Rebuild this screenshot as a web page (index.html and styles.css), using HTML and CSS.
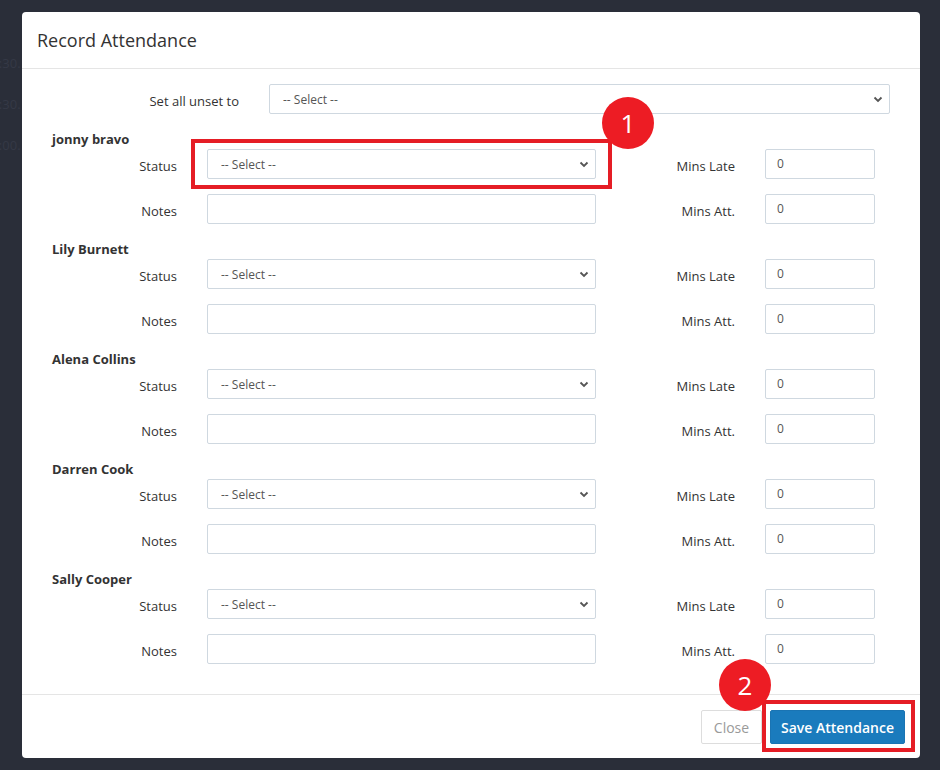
FILE: index.html
```html
<!DOCTYPE html>
<html>
<head>
<meta charset="utf-8">
<link rel="stylesheet" href="styles.css">
</head>
<body>
<div class="page">
  <div class="backdrop-text">
    <div>10:30.</div>
    <div>11:30.</div>
    <div>12:00.</div>
  </div>

  <div class="modal">
    <div class="modal-header"><h4>Record Attendance</h4></div>
    <div class="modal-body">
      <div class="set-all">
        <label>Set all unset to</label>
        <div class="sel">
          <select><option>-- Select --</option></select>
          <svg class="chev" width="10" height="7" viewBox="0 0 10 7"><polyline points="1.5,1.5 5,5 8.5,1.5" fill="none" stroke="#555" stroke-width="1.8"/></svg>
        </div>
      </div>

      <div class="person">
        <div class="name">jonny bravo</div>
        <div class="row">
          <label>Status</label>
          <div class="sel"><select><option>-- Select --</option></select><svg class="chev" width="10" height="7" viewBox="0 0 10 7"><polyline points="1.5,1.5 5,5 8.5,1.5" fill="none" stroke="#555" stroke-width="1.8"/></svg></div>
          <label>Mins Late</label>
          <input class="num" value="0">
        </div>
        <div class="row">
          <label>Notes</label>
          <input class="text" value="">
          <label>Mins Att.</label>
          <input class="num" value="0">
        </div>
      </div>

      <div class="person">
        <div class="name">Lily Burnett</div>
        <div class="row">
          <label>Status</label>
          <div class="sel"><select><option>-- Select --</option></select><svg class="chev" width="10" height="7" viewBox="0 0 10 7"><polyline points="1.5,1.5 5,5 8.5,1.5" fill="none" stroke="#555" stroke-width="1.8"/></svg></div>
          <label>Mins Late</label>
          <input class="num" value="0">
        </div>
        <div class="row">
          <label>Notes</label>
          <input class="text" value="">
          <label>Mins Att.</label>
          <input class="num" value="0">
        </div>
      </div>

      <div class="person">
        <div class="name">Alena Collins</div>
        <div class="row">
          <label>Status</label>
          <div class="sel"><select><option>-- Select --</option></select><svg class="chev" width="10" height="7" viewBox="0 0 10 7"><polyline points="1.5,1.5 5,5 8.5,1.5" fill="none" stroke="#555" stroke-width="1.8"/></svg></div>
          <label>Mins Late</label>
          <input class="num" value="0">
        </div>
        <div class="row">
          <label>Notes</label>
          <input class="text" value="">
          <label>Mins Att.</label>
          <input class="num" value="0">
        </div>
      </div>

      <div class="person">
        <div class="name">Darren Cook</div>
        <div class="row">
          <label>Status</label>
          <div class="sel"><select><option>-- Select --</option></select><svg class="chev" width="10" height="7" viewBox="0 0 10 7"><polyline points="1.5,1.5 5,5 8.5,1.5" fill="none" stroke="#555" stroke-width="1.8"/></svg></div>
          <label>Mins Late</label>
          <input class="num" value="0">
        </div>
        <div class="row">
          <label>Notes</label>
          <input class="text" value="">
          <label>Mins Att.</label>
          <input class="num" value="0">
        </div>
      </div>

      <div class="person">
        <div class="name">Sally Cooper</div>
        <div class="row">
          <label>Status</label>
          <div class="sel"><select><option>-- Select --</option></select><svg class="chev" width="10" height="7" viewBox="0 0 10 7"><polyline points="1.5,1.5 5,5 8.5,1.5" fill="none" stroke="#555" stroke-width="1.8"/></svg></div>
          <label>Mins Late</label>
          <input class="num" value="0">
        </div>
        <div class="row">
          <label>Notes</label>
          <input class="text" value="">
          <label>Mins Att.</label>
          <input class="num" value="0">
        </div>
      </div>
    </div>
    <div class="modal-footer">
      <button class="btn btn-close">Close</button>
      <button class="btn btn-save">Save Attendance</button>
    </div>
  </div>

  <div class="anno-box box1"></div>
  <div class="anno-num num1">1</div>
  <div class="anno-box box2"></div>
  <div class="anno-num num2">2</div>
</div>
</body>
</html>
```

FILE: styles.css
```css
* { box-sizing: border-box; }

html, body {
  margin: 0;
  padding: 0;
}

body {
  background: #2a2e39;
  font-family: "Open Sans", "Liberation Sans", sans-serif;
  color: #333;
  width: 940px;
  height: 770px;
  overflow: hidden;
}

.page {
  position: relative;
  width: 940px;
  height: 770px;
  padding-top: 12px;
  padding-left: 22px;
}

.backdrop-text {
  position: absolute;
  left: -16px;
  top: 43px;
  font-size: 13px;
  color: #353946;
  line-height: 41px;
}

.modal {
  position: relative;
  width: 898px;
  height: 746px;
  background: #fff;
  border-radius: 4px;
  display: flex;
  flex-direction: column;
}

.modal-header {
  height: 57px;
  border-bottom: 1px solid #e5e5e5;
  display: flex;
  align-items: center;
  padding: 0 15px;
}

.modal-header h4 {
  margin: 0;
  font-size: 18px;
  font-weight: 400;
  color: #333;
  padding-bottom: 1px;
}

.modal-body {
  padding: 15px 30px 30px 15px;
  flex: 1;
}

label {
  font-size: 13px;
  color: #333;
  text-align: right;
  padding-right: 30px;
  padding-top: 3px;
  align-self: center;
}

.set-all {
  display: grid;
  grid-template-columns: 232px 621px;
  height: 30px;
}

.sel {
  position: relative;
  height: 30px;
}

.sel select {
  appearance: none;
  -webkit-appearance: none;
  width: 100%;
  height: 30px;
  border: 1px solid #cfd8e0;
  border-radius: 2px;
  background: #fff;
  font-family: "Open Sans", "Liberation Sans", sans-serif;
  font-size: 12px;
  color: #555;
  padding: 0 13px;
  outline: none;
}

.chev {
  position: absolute;
  right: 7px;
  top: 12px;
  pointer-events: none;
}

.person {
  margin-top: 16px;
}

.name {
  font-size: 13px;
  font-weight: 700;
  line-height: 18px;
  height: 18px;
  padding-left: 15px;
  margin-bottom: 1px;
  color: #333;
}

.row {
  display: grid;
  grid-template-columns: 170px 389px 169px 110px;
  height: 30px;
}

.row + .row {
  margin-top: 15px;
}

input {
  height: 30px;
  border: 1px solid #cfd8e0;
  border-radius: 2px;
  background: #fff;
  font-family: "Open Sans", "Liberation Sans", sans-serif;
  font-size: 12px;
  color: #555;
  padding: 0 11px;
  outline: none;
}

.num {
  width: 110px;
  padding-bottom: 1px;
}

.modal-footer {
  height: 64px;
  border-top: 1px solid #e5e5e5;
  display: flex;
  justify-content: flex-end;
  align-items: flex-start;
  padding: 15px 15px 0 15px;
  gap: 8px;
}

.btn {
  height: 34px;
  font-family: "Open Sans", "Liberation Sans", sans-serif;
  font-size: 14px;
  border-radius: 2px;
  padding: 0 6px;
  white-space: nowrap;
  cursor: pointer;
}

.btn-close {
  width: 61px;
  background: #fff;
  border: 1px solid #dddddd;
  color: #9a9a9a;
}

.btn-save {
  width: 135px;
  background: #1a7bbd;
  border: 1px solid #1a74b3;
  color: #fff;
  font-weight: 600;
}

.anno-box {
  position: absolute;
  border: 4px solid #e51d25;
}

.box1 {
  left: 191px;
  top: 139px;
  width: 421px;
  height: 50px;
}

.box2 {
  left: 762px;
  top: 700px;
  width: 153px;
  height: 52px;
}

.anno-num {
  position: absolute;
  width: 52px;
  height: 52px;
  border-radius: 50%;
  background: #ed1c24;
  color: #fff;
  font-size: 26px;
  line-height: 52px;
  text-align: center;
}

.num1 {
  left: 602px;
  top: 97px;
}

.num2 {
  left: 719px;
  top: 659px;
}
```
